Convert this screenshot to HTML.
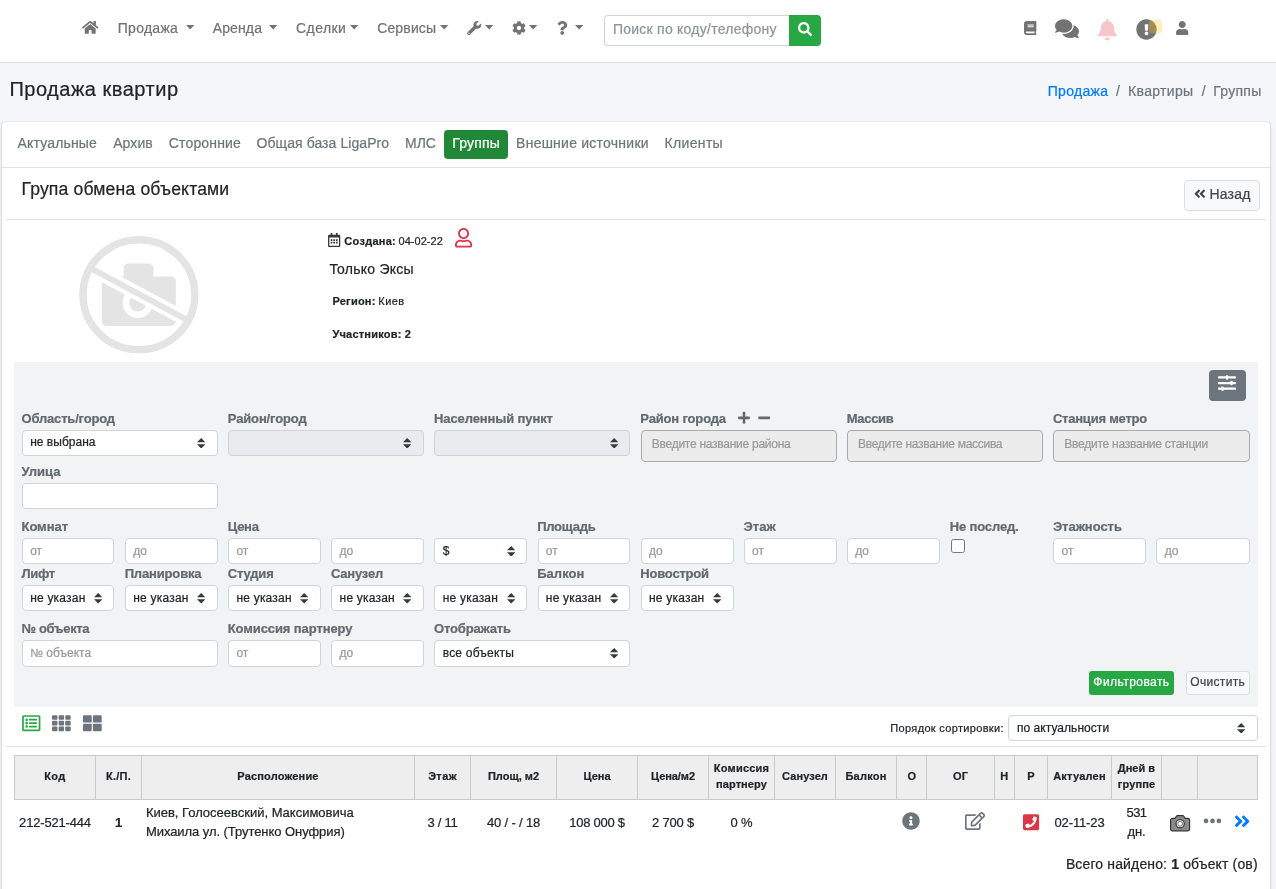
<!DOCTYPE html>
<html lang="ru"><head>
<meta charset="utf-8">
<title>Продажа квартир</title>
<style>
*{box-sizing:border-box;margin:0;padding:0}
html,body{width:1276px;height:889px;overflow:hidden}
body{font-family:"Liberation Sans",sans-serif;background:#f4f6f9;color:#212529;font-size:14px;position:relative;will-change:transform}
.t{position:absolute;white-space:nowrap;line-height:1.2;top:0;-webkit-text-stroke:.22px}
.i{position:absolute;display:block;overflow:visible}
.b{position:absolute}
#nav{left:0;top:0;width:1276px;height:63px;background:#fff;border-bottom:1px solid #dee2e6}
#card{left:2px;top:121.5px;width:1268px;height:800px;background:#fff;border-radius:3px;box-shadow:0 0 1px rgba(0,0,0,.3),0 1px 3px rgba(0,0,0,.22)}
.hr{position:absolute;height:1px;background:#e2e2e2}
.in{position:absolute;height:26px;background:#fff;border:1px solid #ced4da;border-radius:4px}
.dis{background:#e9ecef}
.tag{position:absolute;height:31.5px;background:#ececec;border:1px solid #aaa;border-radius:4px}
.arr{position:absolute;width:8.4px;height:10.6px}
.btn{position:absolute;border-radius:4px}
#tbl{left:14px;top:755px;width:1244px;height:45px;background:#eee;border:1px solid #cacaca}
.vl{position:absolute;top:755px;width:1px;height:45px;background:#cacaca}
</style>
</head>
<body>
<div class="b" id="nav"></div>
<svg class="i" style="left:82px;top:20.4px" width="16.4" height="14.6" viewBox="0 0 576 512" fill="#737373"><path d="M280.37 148.26L96 300.11V464a16 16 0 0 0 16 16l112.06-.29a16 16 0 0 0 15.92-16V368a16 16 0 0 1 16-16h64a16 16 0 0 1 16 16v95.64a16 16 0 0 0 16 16.05L464 480a16 16 0 0 0 16-16V300L295.67 148.26a12.19 12.19 0 0 0-15.3 0zM571.6 251.47L488 182.56V44.05a12 12 0 0 0-12-12h-56a12 12 0 0 0-12 12v72.61L318.47 43a48 48 0 0 0-61 0L4.34 251.47a12 12 0 0 0-1.6 16.9l25.5 31A12 12 0 0 0 45.15 301l235.22-193.74a12.19 12.19 0 0 1 15.3 0L530.9 301a12 12 0 0 0 16.9-1.6l25.5-31a12 12 0 0 0-1.7-16.93z"></path></svg>
<span class="t" style="font-size: 14px; left: 117.78px; color: rgb(115, 115, 115); letter-spacing: 0.272px; top: 20.2px;">Продажа</span>
<svg class="i" style="left:185.9px;top:25.2px" width="8.4" height="4.4" viewBox="0 0 8.4 4.4" fill="#737373"><path d="M0 0h8.400L4.200 4.400z"></path></svg>
<span class="t" style="font-size: 14px; left: 212.68px; color: rgb(115, 115, 115); letter-spacing: 0.138px; top: 20.2px;">Аренда</span>
<svg class="i" style="left:268.5px;top:25.2px" width="8.4" height="4.4" viewBox="0 0 8.4 4.4" fill="#737373"><path d="M0 0h8.400L4.200 4.400z"></path></svg>
<span class="t" style="font-size: 14px; left: 296.08px; color: rgb(115, 115, 115); letter-spacing: 0.42px; top: 20.2px;">Сделки</span>
<svg class="i" style="left:349.5px;top:25.2px" width="8.4" height="4.4" viewBox="0 0 8.4 4.4" fill="#737373"><path d="M0 0h8.400L4.200 4.400z"></path></svg>
<span class="t" style="font-size: 14px; left: 377.18px; color: rgb(115, 115, 115); letter-spacing: 0.146px; top: 20.2px;">Сервисы</span>
<svg class="i" style="left:440.1px;top:25.2px" width="8.4" height="4.4" viewBox="0 0 8.4 4.4" fill="#737373"><path d="M0 0h8.400L4.200 4.400z"></path></svg>
<svg class="i" style="left:466.8px;top:20.8px" width="14.4" height="14" viewBox="0 0 512 512" fill="#737373"><path d="M507.73 109.1c-2.24-9.03-13.54-12.09-20.12-5.51l-74.36 74.36-67.88-11.31-11.31-67.88 74.36-74.36c6.62-6.62 3.43-17.9-5.66-20.16-47.38-11.74-99.55.91-136.58 37.93-39.64 39.64-50.55 97.1-34.05 147.2L18.74 402.76c-24.99 24.99-24.99 65.51 0 90.5 24.99 24.99 65.51 24.99 90.5 0l213.21-213.21c50.12 16.71 107.47 5.68 147.37-34.22 37.07-37.07 49.7-89.32 37.91-136.73zM64 472c-13.25 0-24-10.75-24-24 0-13.26 10.75-24 24-24s24 10.74 24 24c0 13.25-10.75 24-24 24z"></path></svg>
<svg class="i" style="left:484.7px;top:25.2px" width="8.4" height="4.4" viewBox="0 0 8.4 4.4" fill="#737373"><path d="M0 0h8.400L4.200 4.400z"></path></svg>
<svg class="i" style="left:511.6px;top:20.8px" width="14" height="14" viewBox="0 0 512 512" fill="#737373"><path d="M487.4 315.7l-42.6-24.6c4.3-23.2 4.3-47 0-70.2l42.6-24.6c4.9-2.8 7.1-8.6 5.5-14-11.1-35.6-30-67.8-54.7-94.6-3.8-4.1-10-5.1-14.8-2.3L380.8 110c-17.9-15.4-38.5-27.3-60.800-35.100V25.800c0-5.600-3.900-10.500-9.400-11.700-36.700-8.200-74.300-7.800-109.200 0-5.500 1.200-9.400 6.100-9.400 11.700V75c-22.200 7.900-42.800 19.800-60.800 35.100L88.700 85.500c-4.900-2.800-11-1.900-14.800 2.300-24.700 26.700-43.600 58.900-54.700 94.600-1.700 5.400.6 11.200 5.500 14L67.300 221c-4.300 23.200-4.300 47 0 70.200l-42.600 24.600c-4.900 2.800-7.100 8.600-5.500 14 11.100 35.600 30 67.800 54.700 94.600 3.800 4.100 10 5.100 14.800 2.300l42.600-24.600c17.900 15.400 38.500 27.300 60.800 35.100v49.200c0 5.600 3.900 10.500 9.400 11.700 36.700 8.200 74.300 7.800 109.200 0 5.500-1.200 9.400-6.100 9.400-11.700v-49.200c22.200-7.900 42.800-19.800 60.800-35.100l42.600 24.600c4.900 2.800 11 1.900 14.800-2.300 24.700-26.700 43.600-58.900 54.700-94.600 1.500-5.500-.7-11.300-5.600-14.100zM256 336c-44.100 0-80-35.900-80-80s35.900-80 80-80 80 35.900 80 80-35.900 80-80 80z"></path></svg>
<svg class="i" style="left:528.8px;top:25.2px" width="8.4" height="4.4" viewBox="0 0 8.4 4.4" fill="#737373"><path d="M0 0h8.400L4.200 4.400z"></path></svg>
<svg class="i" style="left:556.9px;top:20.6px" width="10.4" height="13.9" viewBox="0 0 384 512" fill="#737373"><path d="M202.021 0C122.202 0 70.503 32.703 29.914 91.026c-7.363 10.580-5.093 25.086 5.178 32.874l43.138 32.709c10.373 7.865 25.132 6.026 33.253-4.148 25.049-31.381 43.630-49.449 82.757-49.449 30.764 0 68.816 19.799 68.816 49.631 0 22.552-18.617 34.134-48.993 51.164-35.423 19.860-82.299 44.576-82.299 106.405V320c0 13.255 10.745 24 24 24h72.471c13.255 0 24-10.745 24-24v-5.773c0-42.860 125.268-44.645 125.268-160.627C377.504 66.256 286.902 0 202.021 0zM192 373.459c-38.196 0-69.271 31.075-69.271 69.271 0 38.195 31.075 69.270 69.271 69.270s69.271-31.075 69.271-69.271-31.075-69.270-69.271-69.270z"></path></svg>
<svg class="i" style="left:574.5px;top:25.2px" width="8.4" height="4.4" viewBox="0 0 8.4 4.4" fill="#737373"><path d="M0 0h8.400L4.200 4.400z"></path></svg>
<div class="b" style="left:604px;top:15px;width:186px;height:31px;background:#fff;border:1px solid #ced4da;border-right:0;border-radius:4px 0 0 4px"></div>
<span class="t" style="font-size: 14px; left: 612.88px; color: rgb(142, 149, 156); letter-spacing: 0.251px; top: 21.3px;">Поиск по коду/телефону</span>
<div class="b" style="left:789px;top:15px;width:32px;height:31px;background:#28a745;border-radius:0 4px 4px 0"></div>
<svg class="i" style="left:798px;top:22.4px" width="14.2" height="14.2" viewBox="0 0 512 512" fill="#fff"><path d="M505 442.7L405.3 343c-4.5-4.5-10.6-7-17-7H372c27.600-35.300 44-79.700 44-128C416 93.100 322.900 0 208 0S0 93.100 0 208s93.100 208 208 208c48.300 0 92.700-16.400 128-44v16.300c0 6.400 2.500 12.500 7 17l99.700 99.700c9.400 9.400 24.600 9.400 33.900 0l28.300-28.300c9.400-9.400 9.400-24.600.1-34zM208 336c-70.700 0-128-57.200-128-128 0-70.700 57.200-128 128-128 70.700 0 128 57.200 128 128 0 70.700-57.200 128-128 128z"></path></svg>
<svg class="i" style="left:1023.8px;top:20.7px" width="12.4" height="14.1" viewBox="0 0 448 512" fill="#737373"><path d="M448 360V24c0-13.300-10.700-24-24-24H96C43 0 0 43 0 96v320c0 53 43 96 96 96h328c13.300 0 24-10.700 24-24v-16c0-7.500-3.500-14.300-8.900-18.700-4.200-15.400-4.200-59.300 0-74.700 5.400-4.300 8.900-11.100 8.900-18.600zM128 134c0-3.300 2.700-6 6-6h212c3.300 0 6 2.700 6 6v20c0 3.300-2.700 6-6 6H134c-3.300 0-6-2.700-6-6v-20zm0 64c0-3.300 2.700-6 6-6h212c3.300 0 6 2.700 6 6v20c0 3.300-2.700 6-6 6H134c-3.300 0-6-2.700-6-6v-20zm253.400 250H96c-17.700 0-32-14.300-32-32 0-17.600 14.400-32 32-32h285.400c-1.900 17.100-1.900 46.900 0 64z"></path></svg>
<svg class="i" style="left:1055.4px;top:18.4px" width="24" height="21.3" viewBox="0 0 576 512" fill="#737373"><path d="M416 192c0-88.400-93.100-160-208-160S0 103.600 0 192c0 34.300 14.100 65.900 38 92-13.400 30.200-35.500 54.200-35.800 54.500-2.200 2.300-2.800 5.700-1.500 8.700S4.800 352 8 352c36.600 0 66.900-12.300 88.700-25 32.200 15.700 70.300 25 111.300 25 114.900 0 208-71.600 208-160zm122 220c23.900-26 38-57.700 38-92 0-66.900-53.500-124.200-129.300-148.100.9 6.600 1.300 13.300 1.300 20.100 0 105.900-107.700 192-240 192-10.800 0-21.300-.8-31.700-1.900C207.800 439.600 281.800 480 368 480c41 0 79.100-9.200 111.300-25 21.800 12.700 52.100 25 88.700 25 3.200 0 6.100-1.900 7.300-4.800 1.300-2.900.7-6.300-1.500-8.700-.3-.3-22.400-24.200-35.800-54.500z"></path></svg>
<svg class="i" style="left:1098.2px;top:18.5px" width="18.7" height="21.3" viewBox="0 0 448 512" fill="#f7c6cb"><path d="M224 512c35.320 0 63.970-28.650 63.970-64H160.030c0 35.350 28.650 64 63.970 64zm215.390-149.710c-19.320-20.760-55.470-51.990-55.470-154.290 0-77.700-54.480-139.900-127.940-155.160V32c0-17.670-14.320-32-31.980-32s-31.980 14.330-31.980 32v20.840C118.560 68.100 64.080 130.300 64.080 208c0 102.300-36.150 133.530-55.470 154.290-6 6.450-8.660 14.160-8.610 21.710.11 16.400 12.980 32 32.100 32h383.800c19.120 0 32-15.600 32.100-32 .05-7.550-2.610-15.270-8.610-21.710z"></path></svg>
<svg class="i" style="left:1135.9px;top:18.6px" width="21" height="21" viewBox="0 0 512 512" fill="#737373"><path d="M504 256c0 136.997-111.043 248-248 248S8 392.997 8 256C8 119.083 119.043 8 256 8s248 111.083 248 248zm-248 50c-25.405 0-46 20.595-46 46s20.595 46 46 46 46-20.595 46-46-20.595-46-46-46zm-43.673-165.346l7.418 136c.347 6.364 5.609 11.346 11.982 11.346h48.546c6.373 0 11.635-4.982 11.982-11.346l7.418-136c.375-6.874-5.098-12.654-11.982-12.654h-63.383c-6.884 0-12.356 5.780-11.981 12.654z"></path></svg>
<div class="b" style="left:1148.7px;top:19.7px;width:13.3px;height:13.5px;background:rgba(255,200,30,.32);border-radius:2px"></div>
<svg class="i" style="left:1176.1px;top:20.8px" width="12.4" height="14.1" viewBox="0 0 448 512" fill="#737373"><path d="M224 256c70.700 0 128-57.300 128-128S294.700 0 224 0 96 57.300 96 128s57.300 128 128 128zm89.600 32h-16.700c-22.200 10.200-46.900 16-72.900 16s-50.600-5.800-72.900-16h-16.700C60.200 288 0 348.200 0 422.400V464c0 26.500 21.500 48 48 48h352c26.500 0 48-21.500 48-48v-41.600c0-74.200-60.200-134.400-134.400-134.400z"></path></svg>
<span class="t" style="font-size: 20px; left: 9.4px; color: rgb(33, 37, 41); letter-spacing: 0.516px; top: 76.8px;">Продажа квартир</span>
<span class="t" style="font-size: 14px; left: 1047.78px; color: rgb(0, 123, 255); letter-spacing: 0.286px; top: 82.8px;">Продажа</span>
<span class="t" style="font-size: 14px; left: 1115.88px; color: rgb(108, 117, 125); top: 82.8px;">/</span>
<span class="t" style="font-size: 14px; left: 1128.08px; color: rgb(108, 117, 125); letter-spacing: 0.32px; top: 82.8px;">Квартиры</span>
<span class="t" style="font-size: 14px; left: 1201.78px; color: rgb(108, 117, 125); top: 82.8px;">/</span>
<span class="t" style="font-size: 14px; left: 1213.28px; color: rgb(108, 117, 125); letter-spacing: 0.264px; top: 82.8px;">Группы</span>
<div class="b" id="card"></div>
<span class="t" style="font-size: 14px; left: 17.58px; color: rgb(108, 117, 125); letter-spacing: 0.147px; top: 135px;">Актуальные</span>
<span class="t" style="font-size: 14px; left: 113.18px; color: rgb(108, 117, 125); letter-spacing: 0.081px; top: 135px;">Архив</span>
<span class="t" style="font-size: 14px; left: 168.78px; color: rgb(108, 117, 125); letter-spacing: 0.16px; top: 135px;">Сторонние</span>
<span class="t" style="font-size: 14px; left: 256.58px; color: rgb(108, 117, 125); letter-spacing: 0.066px; top: 135px;">Общая база LigaPro</span>
<span class="t" style="font-size: 14px; left: 405.08px; color: rgb(108, 117, 125); letter-spacing: -0.043px; top: 135px;">МЛС</span>
<span class="t" style="font-size: 14px; left: 516.08px; color: rgb(108, 117, 125); letter-spacing: 0.239px; top: 135px;">Внешние источники</span>
<span class="t" style="font-size: 14px; left: 664.58px; color: rgb(108, 117, 125); letter-spacing: 0.328px; top: 135px;">Клиенты</span>
<div class="b" style="left:444px;top:130px;width:64px;height:28.6px;background:#218838;border-radius:4px"></div>
<span class="t" style="font-size: 14px; left: 452.18px; color: rgb(255, 255, 255); letter-spacing: 0.197px; top: 135px;">Группы</span>
<div class="hr" style="left:2px;top:167px;width:1268.5px"></div>
<span class="t" style="font-size: 17.6px; left: 21.47px; color: rgb(33, 37, 41); letter-spacing: 0.158px; top: 178.5px;">Група обмена объектами</span>
<div class="btn" style="left:1184.3px;top:180px;width:75.5px;height:31px;background:#f8f9fa;border:1px solid #ddd"></div>
<svg class="i" style="left:1193.6px;top:187.2px" width="11.7" height="13.4" viewBox="0 0 448 512" fill="#444"><path d="M223.7 239l136-136c9.400-9.400 24.600-9.400 33.900 0l22.600 22.600c9.400 9.400 9.400 24.600 0 33.900L319.900 256l96.400 96.400c9.400 9.400 9.400 24.600 0 33.900L393.700 409c-9.400 9.400-24.600 9.400-33.900 0l-136-136c-9.500-9.400-9.500-24.600-.1-34zm-192 34l136 136c9.400 9.400 24.600 9.400 33.900 0l22.600-22.600c9.400-9.400 9.400-24.600 0-33.900L127.900 256l96.400-96.400c9.400-9.400 9.400-24.600 0-33.900L201.700 103c-9.400-9.400-24.600-9.400-33.900 0l-136 136c-9.500 9.400-9.500 24.600-.1 34z"></path></svg>
<span class="t" style="font-size: 14px; left: 1209.38px; color: rgb(68, 68, 68); letter-spacing: 0.223px; top: 186px;">Назад</span>
<div class="hr" style="left:6px;top:219px;width:1260px"></div>
<svg class="i" style="left:76px;top:232px" width="126" height="126" viewBox="0 0 126 126">
<path fill="#e4e4e4" d="M25.700 49.400a5 5 0 0 1 5-5h17v-8a5 5 0 0 1 5-5h19.700a5 5 0 0 1 5 5v8h17.400a5 5 0 0 1 5 5v39.500a5 5 0 0 1-5 5h-64.100a5 5 0 0 1-5-5z"></path>
<circle cx="61.800" cy="70.800" r="15.200" fill="#fff"></circle>
<circle cx="61.800" cy="70.800" r="8.600" fill="#e4e4e4"></circle>
<path stroke="#fff" stroke-width="14" d="M14.500 36.100L111.500 88.100"></path>
<path stroke="#e4e4e4" stroke-width="6" d="M14.500 36.100L111.500 88.100"></path>
<ellipse cx="62.900" cy="62.800" rx="58.500" ry="57.500" fill="none" stroke="#fff" stroke-width="5"></ellipse>
<ellipse cx="62.900" cy="62.800" rx="56" ry="55" fill="none" stroke="#e4e4e4" stroke-width="7.600"></ellipse>
<ellipse cx="62.900" cy="62.800" rx="62.500" ry="61.500" fill="none" stroke="#fff" stroke-width="5.500"></ellipse>
</svg>
<svg class="i" style="left:328.2px;top:233px" width="12.3" height="14" viewBox="0 0 448 512" fill="#343a40"><path d="M148 288h-40c-6.600 0-12-5.400-12-12v-40c0-6.600 5.400-12 12-12h40c6.600 0 12 5.400 12 12v40c0 6.600-5.400 12-12 12zm108-12v-40c0-6.600-5.400-12-12-12h-40c-6.600 0-12 5.400-12 12v40c0 6.600 5.400 12 12 12h40c6.600 0 12-5.400 12-12zm96 0v-40c0-6.600-5.400-12-12-12h-40c-6.600 0-12 5.400-12 12v40c0 6.600 5.400 12 12 12h40c6.600 0 12-5.400 12-12zm-96 96v-40c0-6.600-5.400-12-12-12h-40c-6.600 0-12 5.400-12 12v40c0 6.600 5.400 12 12 12h40c6.600 0 12-5.400 12-12zm-96 0v-40c0-6.600-5.400-12-12-12h-40c-6.600 0-12 5.400-12 12v40c0 6.600 5.400 12 12 12h40c6.600 0 12-5.400 12-12zm192 0v-40c0-6.600-5.400-12-12-12h-40c-6.600 0-12 5.400-12 12v40c0 6.600 5.400 12 12 12h40c6.600 0 12-5.400 12-12zm96-260v352c0 26.500-21.500 48-48 48H48c-26.500 0-48-21.500-48-48V112c0-26.500 21.500-48 48-48h48V12c0-6.600 5.400-12 12-12h40c6.600 0 12 5.400 12 12v52h128V12c0-6.600 5.400-12 12-12h40c6.600 0 12 5.400 12 12v52h48c26.500 0 48 21.500 48 48zm-48 346V160H48v298c0 3.300 2.700 6 6 6h340c3.300 0 6-2.700 6-6z"></path></svg>
<span class="t" style="font-size: 11px; left: 344.37px; color: rgb(33, 37, 41); font-weight: bold; letter-spacing: 0.268px; top: 235.1px;">Создана:</span>
<span class="t" style="font-size: 11px; left: 398.47px; color: rgb(33, 37, 41); letter-spacing: 0.052px; top: 235.1px;">04-02-22</span>
<svg class="i" style="left:455.2px;top:227.8px" width="17.2" height="19.6" viewBox="0 0 448 512" fill="#dc3545"><path d="M313.600 304c-28.700 0-42.500 16-89.600 16-47.100 0-60.800-16-89.600-16C60.200 304 0 364.200 0 438.400V464c0 26.500 21.500 48 48 48h352c26.500 0 48-21.500 48-48v-25.600c0-74.200-60.200-134.400-134.400-134.400zM400 464H48v-25.600c0-47.600 38.800-86.400 86.400-86.400 14.600 0 38.300 16 89.600 16 51.700 0 74.900-16 89.600-16 47.600 0 86.400 38.800 86.400 86.400V464zM224 288c79.500 0 144-64.500 144-144S303.500 0 224 0 80 64.500 80 144s64.500 144 144 144zm0-240c52.900 0 96 43.100 96 96s-43.100 96-96 96-96-43.100-96-96 43.100-96 96-96z"></path></svg>
<span class="t" style="font-size: 14px; left: 329.38px; color: rgb(33, 37, 41); letter-spacing: 0.252px; top: 261.1px;">Только Эксы</span>
<span class="t" style="font-size: 11px; left: 332.47px; color: rgb(33, 37, 41); font-weight: bold; letter-spacing: 0.228px; top: 294.6px;">Регион:</span>
<span class="t" style="font-size: 11px; left: 378.37px; color: rgb(33, 37, 41); letter-spacing: 0.386px; top: 294.6px;">Киев</span>
<span class="t" style="font-size: 11px; left: 332.47px; color: rgb(33, 37, 41); font-weight: bold; letter-spacing: 0.209px; top: 327.6px;">Участников: 2</span>
<div class="b" style="left:14px;top:362px;width:1244px;height:345px;background:#f1f3f5"></div>
<div class="btn" style="left:1209px;top:370px;width:37.2px;height:31px;background:#6c757d"></div>
<svg class="i" style="left:1218.3px;top:373.7px" width="18" height="18" viewBox="0 0 512 512" fill="#fff"><path d="M496 384H160v-16c0-8.800-7.200-16-16-16h-32c-8.800 0-16 7.200-16 16v16H16c-8.800 0-16 7.200-16 16v32c0 8.800 7.200 16 16 16h80v16c0 8.800 7.200 16 16 16h32c8.800 0 16-7.200 16-16v-16h336c8.800 0 16-7.200 16-16v-32c0-8.800-7.200-16-16-16zm0-160h-80v-16c0-8.800-7.200-16-16-16h-32c-8.800 0-16 7.200-16 16v16H16c-8.800 0-16 7.200-16 16v32c0 8.800 7.200 16 16 16h336v16c0 8.800 7.200 16 16 16h32c8.800 0 16-7.200 16-16v-16h80c8.800 0 16-7.200 16-16v-32c0-8.800-7.200-16-16-16zm0-160H288V48c0-8.800-7.200-16-16-16h-32c-8.800 0-16 7.200-16 16v16H16C7.200 64 0 71.200 0 80v32c0 8.800 7.200 16 16 16h208v16c0 8.800 7.200 16 16 16h32c8.800 0 16-7.200 16-16v-16h208c8.800 0 16-7.200 16-16V80c0-8.800-7.200-16-16-16z"></path></svg>
<span class="t" style="font-size: 13px; left: 21.51px; color: rgb(98, 106, 113); font-weight: bold; letter-spacing: -0.175px; top: 411.2px;">Область/город</span>
<div class="in" style="left:21.9px;top:430px;width:195.74px;height:26px"></div>
<span class="t" style="font-size: 12px; left: 30.14px; color: rgb(33, 37, 41); letter-spacing: 0.026px; top: 435.4px;">не выбрана</span>
<svg class="arr" style="left:197.04px;top:437.6px" viewBox="0 0 8.4 10.6" fill="#343a40"><path d="M0 4.300L4.200 0l4.200 4.300zM0 6.300h8.400L4.200 10.600z"></path></svg>
<span class="t" style="font-size: 13px; left: 227.79px; color: rgb(98, 106, 113); font-weight: bold; letter-spacing: -0.136px; top: 411.2px;">Район/город</span>
<div class="in dis" style="left:228.18px;top:430px;width:195.84px;height:26px"></div>
<svg class="arr" style="left:403.42px;top:437.6px" viewBox="0 0 8.4 10.6" fill="#343a40"><path d="M0 4.300L4.200 0l4.200 4.300zM0 6.300h8.400L4.200 10.600z"></path></svg>
<span class="t" style="font-size: 13px; left: 434.07px; color: rgb(98, 106, 113); font-weight: bold; letter-spacing: -0.115px; top: 411.2px;">Населенный пункт</span>
<div class="in dis" style="left:434.46px;top:430px;width:195.94px;height:26px"></div>
<svg class="arr" style="left:609.8px;top:437.6px" viewBox="0 0 8.4 10.6" fill="#343a40"><path d="M0 4.300L4.200 0l4.200 4.300zM0 6.300h8.400L4.200 10.600z"></path></svg>
<span class="t" style="font-size: 13px; left: 640.35px; color: rgb(98, 106, 113); font-weight: bold; letter-spacing: -0.161px; top: 411.2px;">Район города</span>
<svg class="i" style="left:738.4px;top:411.3px" width="12" height="13.7" viewBox="0 0 448 512" fill="#626a71"><path d="M416 208H272V64c0-17.670-14.330-32-32-32h-32c-17.670 0-32 14.330-32 32v144H32c-17.670 0-32 14.330-32 32v32c0 17.670 14.330 32 32 32h144v144c0 17.670 14.330 32 32 32h32c17.670 0 32-14.330 32-32V304h144c17.670 0 32-14.330 32-32v-32c0-17.670-14.330-32-32-32z"></path></svg>
<svg class="i" style="left:758px;top:411.3px" width="12.4" height="13.7" viewBox="0 0 448 512" fill="#626a71"><path d="M416 208H32c-17.670 0-32 14.330-32 32v32c0 17.670 14.330 32 32 32h384c17.670 0 32-14.330 32-32v-32c0-17.670-14.330-32-32-32z"></path></svg>
<span class="t" style="font-size: 13px; left: 846.63px; color: rgb(98, 106, 113); font-weight: bold; letter-spacing: -0.315px; top: 411.2px;">Массив</span>
<span class="t" style="font-size: 13px; left: 1052.91px; color: rgb(98, 106, 113); font-weight: bold; letter-spacing: -0.221px; top: 411.2px;">Станция метро</span>
<div class="tag" style="left:640.74px;top:430px;width:196.04px"></div>
<span class="t" style="font-size: 12px; left: 651.78px; color: rgb(153, 153, 153); letter-spacing: -0.259px; top: 437.4px;">Введите название района</span>
<div class="tag" style="left:847.02px;top:430px;width:196.14px"></div>
<span class="t" style="font-size: 12px; left: 858.06px; color: rgb(153, 153, 153); letter-spacing: -0.291px; top: 437.4px;">Введите название массива</span>
<div class="tag" style="left:1053.3px;top:430px;width:196.24px"></div>
<span class="t" style="font-size: 12px; left: 1064.34px; color: rgb(153, 153, 153); letter-spacing: -0.245px; top: 437.4px;">Введите название станции</span>
<span class="t" style="font-size: 13px; left: 21.51px; color: rgb(98, 106, 113); font-weight: bold; letter-spacing: 0.015px; top: 463.5px;">Улица</span>
<div class="in" style="left:21.9px;top:483px;width:195.74px"></div>
<span class="t" style="font-size: 13px; left: 21.51px; color: rgb(98, 106, 113); font-weight: bold; letter-spacing: -0.05px; top: 519px;">Комнат</span>
<div class="in" style="left:21.9px;top:538.2px;width:92.55px"></div>
<span class="t" style="font-size: 12px; left: 30.14px; color: rgb(153, 153, 153); top: 544.3px;">от</span>
<div class="in" style="left:125.04px;top:538.2px;width:92.6px"></div>
<span class="t" style="font-size: 12px; left: 133.28px; color: rgb(153, 153, 153); top: 544.3px;">до</span>
<span class="t" style="font-size: 13px; left: 227.79px; color: rgb(98, 106, 113); font-weight: bold; letter-spacing: -0.297px; top: 519px;">Цена</span>
<div class="in" style="left:228.18px;top:538.2px;width:92.65px"></div>
<span class="t" style="font-size: 12px; left: 236.42px; color: rgb(153, 153, 153); top: 544.3px;">от</span>
<div class="in" style="left:331.32px;top:538.2px;width:92.7px"></div>
<span class="t" style="font-size: 12px; left: 339.56px; color: rgb(153, 153, 153); top: 544.3px;">до</span>
<div class="in" style="left:434.46px;top:538.2px;width:92.75px;height:26px"></div>
<span class="t" style="font-size: 12px; left: 442.7px; color: rgb(33, 37, 41); top: 543.6px;">$</span>
<svg class="arr" style="left:506.61px;top:545.8px" viewBox="0 0 8.4 10.6" fill="#343a40"><path d="M0 4.300L4.200 0l4.200 4.300zM0 6.300h8.400L4.200 10.600z"></path></svg>
<span class="t" style="font-size: 13px; left: 537.21px; color: rgb(98, 106, 113); font-weight: bold; letter-spacing: -0.258px; top: 519px;">Площадь</span>
<div class="in" style="left:537.6px;top:538.2px;width:92.8px"></div>
<span class="t" style="font-size: 12px; left: 545.84px; color: rgb(153, 153, 153); top: 544.3px;">от</span>
<div class="in" style="left:640.74px;top:538.2px;width:92.85px"></div>
<span class="t" style="font-size: 12px; left: 648.98px; color: rgb(153, 153, 153); top: 544.3px;">до</span>
<span class="t" style="font-size: 13px; left: 743.49px; color: rgb(98, 106, 113); font-weight: bold; letter-spacing: 0.079px; top: 519px;">Этаж</span>
<div class="in" style="left:743.88px;top:538.2px;width:92.9px"></div>
<span class="t" style="font-size: 12px; left: 752.12px; color: rgb(153, 153, 153); top: 544.3px;">от</span>
<div class="in" style="left:847.02px;top:538.2px;width:92.95px"></div>
<span class="t" style="font-size: 12px; left: 855.26px; color: rgb(153, 153, 153); top: 544.3px;">до</span>
<span class="t" style="font-size: 13px; left: 949.77px; color: rgb(98, 106, 113); font-weight: bold; letter-spacing: -0.149px; top: 519px;">Не послед.</span>
<div class="b" style="left:951.3px;top:539.3px;width:13.3px;height:13.3px;background:#fff;border:1px solid #767676;border-radius:2.5px"></div>
<span class="t" style="font-size: 13px; left: 1052.91px; color: rgb(98, 106, 113); font-weight: bold; letter-spacing: -0.033px; top: 519px;">Этажность</span>
<div class="in" style="left:1053.3px;top:538.2px;width:93.05px"></div>
<span class="t" style="font-size: 12px; left: 1061.54px; color: rgb(153, 153, 153); top: 544.3px;">от</span>
<div class="in" style="left:1156.44px;top:538.2px;width:93.1px"></div>
<span class="t" style="font-size: 12px; left: 1164.68px; color: rgb(153, 153, 153); top: 544.3px;">до</span>
<span class="t" style="font-size: 13px; left: 21.51px; color: rgb(98, 106, 113); font-weight: bold; letter-spacing: -0.327px; top: 566px;">Лифт</span>
<span class="t" style="font-size: 13px; left: 124.65px; color: rgb(98, 106, 113); font-weight: bold; letter-spacing: -0.152px; top: 566px;">Планировка</span>
<span class="t" style="font-size: 13px; left: 227.79px; color: rgb(98, 106, 113); font-weight: bold; letter-spacing: -0.175px; top: 566px;">Студия</span>
<span class="t" style="font-size: 13px; left: 330.93px; color: rgb(98, 106, 113); font-weight: bold; letter-spacing: -0.184px; top: 566px;">Санузел</span>
<span class="t" style="font-size: 13px; left: 537.21px; color: rgb(98, 106, 113); font-weight: bold; letter-spacing: 0.035px; top: 566px;">Балкон</span>
<span class="t" style="font-size: 13px; left: 640.35px; color: rgb(98, 106, 113); font-weight: bold; letter-spacing: -0.212px; top: 566px;">Новострой</span>
<div class="in" style="left:21.9px;top:585px;width:92.55px;height:26px"></div>
<span class="t" style="font-size: 12px; left: 30.14px; color: rgb(33, 37, 41); letter-spacing: 0.213px; top: 591.4px;">не указан</span>
<svg class="arr" style="left:93.85px;top:593.4px" viewBox="0 0 8.4 10.6" fill="#343a40"><path d="M0 4.300L4.200 0l4.200 4.300zM0 6.300h8.400L4.200 10.600z"></path></svg>
<div class="in" style="left:125.04px;top:585px;width:92.6px;height:26px"></div>
<span class="t" style="font-size: 12px; left: 133.28px; color: rgb(33, 37, 41); letter-spacing: 0.213px; top: 591.4px;">не указан</span>
<svg class="arr" style="left:197.04px;top:593.4px" viewBox="0 0 8.4 10.6" fill="#343a40"><path d="M0 4.300L4.200 0l4.200 4.300zM0 6.300h8.400L4.200 10.600z"></path></svg>
<div class="in" style="left:228.18px;top:585px;width:92.65px;height:26px"></div>
<span class="t" style="font-size: 12px; left: 236.42px; color: rgb(33, 37, 41); letter-spacing: 0.213px; top: 591.4px;">не указан</span>
<svg class="arr" style="left:300.23px;top:593.4px" viewBox="0 0 8.4 10.6" fill="#343a40"><path d="M0 4.300L4.200 0l4.200 4.300zM0 6.300h8.400L4.200 10.600z"></path></svg>
<div class="in" style="left:331.32px;top:585px;width:92.7px;height:26px"></div>
<span class="t" style="font-size: 12px; left: 339.56px; color: rgb(33, 37, 41); letter-spacing: 0.213px; top: 591.4px;">не указан</span>
<svg class="arr" style="left:403.42px;top:593.4px" viewBox="0 0 8.4 10.6" fill="#343a40"><path d="M0 4.300L4.200 0l4.200 4.300zM0 6.300h8.400L4.200 10.600z"></path></svg>
<div class="in" style="left:434.46px;top:585px;width:92.75px;height:26px"></div>
<span class="t" style="font-size: 12px; left: 442.7px; color: rgb(33, 37, 41); letter-spacing: 0.213px; top: 591.4px;">не указан</span>
<svg class="arr" style="left:506.61px;top:593.4px" viewBox="0 0 8.4 10.6" fill="#343a40"><path d="M0 4.300L4.200 0l4.200 4.300zM0 6.300h8.400L4.200 10.600z"></path></svg>
<div class="in" style="left:537.6px;top:585px;width:92.8px;height:26px"></div>
<span class="t" style="font-size: 12px; left: 545.84px; color: rgb(33, 37, 41); letter-spacing: 0.213px; top: 591.4px;">не указан</span>
<svg class="arr" style="left:609.8px;top:593.4px" viewBox="0 0 8.4 10.6" fill="#343a40"><path d="M0 4.300L4.200 0l4.200 4.300zM0 6.300h8.400L4.200 10.600z"></path></svg>
<div class="in" style="left:640.74px;top:585px;width:92.85px;height:26px"></div>
<span class="t" style="font-size: 12px; left: 648.98px; color: rgb(33, 37, 41); letter-spacing: 0.213px; top: 591.4px;">не указан</span>
<svg class="arr" style="left:712.99px;top:593.4px" viewBox="0 0 8.4 10.6" fill="#343a40"><path d="M0 4.300L4.200 0l4.200 4.300zM0 6.300h8.400L4.200 10.600z"></path></svg>
<span class="t" style="font-size: 13px; left: 21.51px; color: rgb(98, 106, 113); font-weight: bold; letter-spacing: -0.327px; top: 621.2px;">№ объекта</span>
<div class="in" style="left:21.9px;top:640.2px;width:195.74px;height:27px"></div>
<span class="t" style="font-size: 12px; left: 30.14px; color: rgb(153, 153, 153); top: 646.3px;">№ объекта</span>
<span class="t" style="font-size: 13px; left: 227.79px; color: rgb(98, 106, 113); font-weight: bold; letter-spacing: -0.099px; top: 621.2px;">Комиссия партнеру</span>
<div class="in" style="left:228.18px;top:640.2px;width:92.65px;height:27px"></div>
<span class="t" style="font-size: 12px; left: 236.42px; color: rgb(153, 153, 153); top: 646.3px;">от</span>
<div class="in" style="left:331.32px;top:640.2px;width:92.7px;height:27px"></div>
<span class="t" style="font-size: 12px; left: 339.56px; color: rgb(153, 153, 153); top: 646.3px;">до</span>
<span class="t" style="font-size: 13px; left: 434.07px; color: rgb(98, 106, 113); font-weight: bold; letter-spacing: -0.164px; top: 621.2px;">Отображать</span>
<div class="in" style="left:434.46px;top:640.2px;width:195.94px;height:27px"></div>
<span class="t" style="font-size: 12px; left: 442.7px; color: rgb(33, 37, 41); letter-spacing: 0.213px; top: 645.6px;">все объекты</span>
<svg class="arr" style="left:609.8px;top:647.8px" viewBox="0 0 8.4 10.6" fill="#343a40"><path d="M0 4.300L4.200 0l4.200 4.300zM0 6.300h8.400L4.200 10.600z"></path></svg>
<div class="btn" style="left:1089px;top:671.2px;width:85px;height:23.8px;background:#28a745;border-radius:3px"></div>
<span class="t" style="font-size: 12px; left: 1093.34px; color: rgb(255, 255, 255); letter-spacing: 0.439px; top: 674.8px;">Фильтровать</span>
<div class="btn" style="left:1186px;top:671.2px;width:63.6px;height:23.8px;background:#f8f9fa;border:1px solid #ddd;border-radius:3px"></div>
<span class="t" style="font-size: 12px; left: 1190.24px; color: rgb(68, 68, 68); letter-spacing: 0.334px; top: 674.8px;">Очистить</span>
<svg class="i" style="left:21.7px;top:713.8px" width="18.5" height="18.3" viewBox="0 0 512 512" fill="#28a745"><path d="M464 32H48C21.490 32 0 53.490 0 80v352c0 26.510 21.490 48 48 48h416c26.510 0 48-21.490 48-48V80c0-26.510-21.490-48-48-48zm-6 400H54a6 6 0 0 1-6-6V86a6 6 0 0 1 6-6h404a6 6 0 0 1 6 6v340a6 6 0 0 1-6 6zm-42-92v24c0 6.627-5.373 12-12 12H204c-6.627 0-12-5.373-12-12v-24c0-6.627 5.373-12 12-12h200c6.627 0 12 5.373 12 12zm0-96v24c0 6.627-5.373 12-12 12H204c-6.627 0-12-5.373-12-12v-24c0-6.627 5.373-12 12-12h200c6.627 0 12 5.373 12 12zm0-96v24c0 6.627-5.373 12-12 12H204c-6.627 0-12-5.373-12-12v-24c0-6.627 5.373-12 12-12h200c6.627 0 12 5.373 12 12zm-252 12c0 19.882-16.118 36-36 36s-36-16.118-36-36 16.118-36 36-36 36 16.118 36 36zm0 96c0 19.882-16.118 36-36 36s-36-16.118-36-36 16.118-36 36-36 36 16.118 36 36zm0 96c0 19.882-16.118 36-36 36s-36-16.118-36-36 16.118-36 36-36 36 16.118 36 36z"></path></svg>
<svg class="i" style="left:52.1px;top:713.7px" width="18.7" height="18.3" viewBox="0 0 512 512" preserveAspectRatio="none" fill="#6c757d"><rect x="0" y="32" width="149.3" height="128" rx="24"></rect><rect x="181.3" y="32" width="149.3" height="128" rx="24"></rect><rect x="362.7" y="32" width="149.3" height="128" rx="24"></rect><rect x="0" y="192" width="149.3" height="128" rx="24"></rect><rect x="181.3" y="192" width="149.3" height="128" rx="24"></rect><rect x="362.7" y="192" width="149.3" height="128" rx="24"></rect><rect x="0" y="352" width="149.3" height="128" rx="24"></rect><rect x="181.3" y="352" width="149.3" height="128" rx="24"></rect><rect x="362.7" y="352" width="149.3" height="128" rx="24"></rect></svg>
<svg class="i" style="left:82.8px;top:713.7px" width="18.7" height="18.3" viewBox="0 0 512 512" preserveAspectRatio="none" fill="#6c757d"><rect x="0" y="32" width="240" height="208" rx="24"></rect><rect x="272" y="32" width="240" height="208" rx="24"></rect><rect x="0" y="272" width="240" height="208" rx="24"></rect><rect x="272" y="272" width="240" height="208" rx="24"></rect></svg>
<span class="t" style="font-size: 11px; left: 890.37px; color: rgb(33, 37, 41); letter-spacing: 0.325px; top: 721.6px;">Порядок сортировки:</span>
<div class="in" style="left:1008.2px;top:715.4px;width:249.6px;height:25.4px"></div>
<span class="t" style="font-size: 12px; left: 1016.94px; color: rgb(33, 37, 41); letter-spacing: 0.048px; top: 720.6px;">по актуальности</span>
<svg class="arr" style="left:1236.9px;top:722.8px" viewBox="0 0 8.4 10.6" fill="#343a40"><path d="M0 4.300L4.200 0l4.200 4.300zM0 6.300h8.400L4.200 10.600z"></path></svg>
<div class="hr" style="left:6px;top:746px;width:1260px"></div>
<div class="b" id="tbl"></div>
<div class="vl" style="left:95px"></div>
<div class="vl" style="left:141px"></div>
<div class="vl" style="left:414px"></div>
<div class="vl" style="left:470px"></div>
<div class="vl" style="left:556px"></div>
<div class="vl" style="left:637px"></div>
<div class="vl" style="left:708px"></div>
<div class="vl" style="left:774px"></div>
<div class="vl" style="left:835px"></div>
<div class="vl" style="left:896px"></div>
<div class="vl" style="left:926px"></div>
<div class="vl" style="left:994px"></div>
<div class="vl" style="left:1014px"></div>
<div class="vl" style="left:1047px"></div>
<div class="vl" style="left:1111px"></div>
<div class="vl" style="left:1161px"></div>
<div class="vl" style="left:1197px"></div>
<span class="t" style="font-size: 11px; color: rgb(33, 37, 41); font-weight: bold; letter-spacing: 0.46px; left: 44.17px; top: 770.1px;">Код</span>
<span class="t" style="font-size: 11px; color: rgb(33, 37, 41); font-weight: bold; letter-spacing: 0.233px; left: 106.02px; top: 770.1px;">К./П.</span>
<span class="t" style="font-size: 11px; color: rgb(33, 37, 41); font-weight: bold; letter-spacing: 0.177px; left: 237.32px; top: 770.1px;">Расположение</span>
<span class="t" style="font-size: 11px; color: rgb(33, 37, 41); font-weight: bold; letter-spacing: 0.405px; left: 428.13px; top: 770.1px;">Этаж</span>
<span class="t" style="font-size: 11px; color: rgb(33, 37, 41); font-weight: bold; letter-spacing: -0.008px; left: 487.97px; top: 770.1px;">Площ, м2</span>
<span class="t" style="font-size: 11px; color: rgb(33, 37, 41); font-weight: bold; letter-spacing: -0.001px; left: 583.48px; top: 770.1px;">Цена</span>
<span class="t" style="font-size: 11px; color: rgb(33, 37, 41); font-weight: bold; letter-spacing: -0.074px; left: 651.08px; top: 770.1px;">Цена/м2</span>
<span class="t" style="font-size: 11px; color: rgb(33, 37, 41); font-weight: bold; letter-spacing: 0.219px; left: 713.82px; top: 761.8px;">Комиссия</span>
<span class="t" style="font-size: 11px; color: rgb(33, 37, 41); font-weight: bold; letter-spacing: 0.084px; left: 716.07px; top: 777.8px;">партнеру</span>
<span class="t" style="font-size: 11px; color: rgb(33, 37, 41); font-weight: bold; letter-spacing: 0.087px; left: 782.07px; top: 770.1px;">Санузел</span>
<span class="t" style="font-size: 11px; color: rgb(33, 37, 41); font-weight: bold; letter-spacing: 0.252px; left: 845.38px; top: 770.1px;">Балкон</span>
<span class="t" style="font-size: 11px; color: rgb(33, 37, 41); font-weight: bold; letter-spacing: -0.402px; left: 907.42px; top: 770.1px;">О</span>
<span class="t" style="font-size: 11px; color: rgb(33, 37, 41); font-weight: bold; letter-spacing: 0.082px; left: 953.02px; top: 770.1px;">ОГ</span>
<span class="t" style="font-size: 11px; color: rgb(33, 37, 41); font-weight: bold; letter-spacing: 0.607px; left: 1000.22px; top: 770.1px;">Н</span>
<span class="t" style="font-size: 11px; color: rgb(33, 37, 41); font-weight: bold; letter-spacing: 0.216px; left: 1027.22px; top: 770.1px;">Р</span>
<span class="t" style="font-size: 11px; color: rgb(33, 37, 41); font-weight: bold; letter-spacing: 0.231px; left: 1053.17px; top: 770.1px;">Актуален</span>
<span class="t" style="font-size: 11px; color: rgb(33, 37, 41); font-weight: bold; letter-spacing: 0.029px; left: 1117.82px; top: 762.2px;">Дней в</span>
<span class="t" style="font-size: 11px; color: rgb(33, 37, 41); font-weight: bold; letter-spacing: 0.112px; left: 1117.82px; top: 778px;">группе</span>
<span class="t" style="font-size: 13px; color: rgb(33, 37, 41); letter-spacing: -0.178px; left: 19.11px; top: 815px;">212-521-444</span>
<span class="t" style="font-size: 13px; color: rgb(33, 37, 41); font-weight: bold; left: 114.88px; top: 815px;">1</span>
<span class="t" style="font-size: 13px; left: 145.91px; color: rgb(33, 37, 41); letter-spacing: -0.01px; top: 805px;">Киев, Голосеевский, Максимовича</span>
<span class="t" style="font-size: 13px; left: 145.91px; color: rgb(33, 37, 41); letter-spacing: -0.061px; top: 823.7px;">Михаила ул. (Трутенко Онуфрия)</span>
<span class="t" style="font-size: 13px; color: rgb(33, 37, 41); letter-spacing: -0.247px; left: 427.45px; top: 815px;">3 / 11</span>
<span class="t" style="font-size: 13px; color: rgb(33, 37, 41); letter-spacing: -0.158px; left: 486.91px; top: 815px;">40 / - / 18</span>
<span class="t" style="font-size: 13px; color: rgb(33, 37, 41); letter-spacing: -0.285px; left: 569.36px; top: 815px;">108 000 $</span>
<span class="t" style="font-size: 13px; color: rgb(33, 37, 41); letter-spacing: -0.171px; left: 651.91px; top: 815px;">2 700 $</span>
<span class="t" style="font-size: 13px; color: rgb(33, 37, 41); letter-spacing: -0.109px; left: 730.46px; top: 815px;">0 %</span>
<svg class="i" style="left:902.2px;top:811.9px" width="18" height="18" viewBox="0 0 512 512" fill="#6c757d"><path d="M256 8C119.043 8 8 119.083 8 256c0 136.997 111.043 248 248 248s248-111.003 248-248C504 119.083 392.957 8 256 8zm0 110c23.196 0 42 18.804 42 42s-18.804 42-42 42-42-18.804-42-42 18.804-42 42-42zm56 254c0 6.627-5.373 12-12 12h-88c-6.627 0-12-5.373-12-12v-24c0-6.627 5.373-12 12-12h12v-64h-12c-6.627 0-12-5.373-12-12v-24c0-6.627 5.373-12 12-12h64c6.627 0 12 5.373 12 12v100h12c6.627 0 12 5.373 12 12v24z"></path></svg>
<svg class="i" style="left:964.9px;top:811.8px" width="20.1" height="17.9" viewBox="0 0 576 512" fill="#6c757d"><path d="M402.3 344.9l32-32c5-5 13.700-1.500 13.700 5.700V464c0 26.500-21.500 48-48 48H48c-26.500 0-48-21.500-48-48V112c0-26.500 21.500-48 48-48h273.500c7.100 0 10.700 8.600 5.700 13.700l-32 32c-1.500 1.500-3.500 2.300-5.700 2.300H48v352h352V350.500c0-2.100.8-4.100 2.300-5.600zm156.600-201.800L296.300 405.700l-90.400 10c-26.200 2.900-48.500-19.200-45.600-45.600l10-90.400L432.900 17.100c22.900-22.900 59.900-22.900 82.700 0l43.200 43.200c22.900 22.900 22.900 60 .1 82.800zM460.100 174L402 115.900 216.200 301.800l-7.300 65.300 65.300-7.300L460.100 174zm64.800-79.700l-43.200-43.200c-4.100-4.100-10.800-4.100-14.800 0L436 82l58.100 58.100 30.900-30.900c4-4.200 4-10.800-.1-14.900z"></path></svg>
<svg class="i" style="left:1022.9px;top:812.9px" width="16.1" height="18.4" viewBox="0 0 448 512" fill="#dc3545"><path d="M400 32H48C21.490 32 0 53.490 0 80v352c0 26.510 21.490 48 48 48h352c26.510 0 48-21.490 48-48V80c0-26.510-21.490-48-48-48zM94 416c-7.033 0-13.057-4.873-14.616-11.627l-14.998-65a15 15 0 0 1 8.707-17.160l69.998-29.999a15 15 0 0 1 17.518 4.289l30.997 37.885c48.944-22.963 88.297-62.858 110.781-110.780l-37.886-30.997a15.001 15.001 0 0 1-4.289-17.518l30-69.998a15 15 0 0 1 17.160-8.707l65 14.998A14.997 14.997 0 0 1 384 126c0 160.292-129.945 290-290 290z"></path></svg>
<span class="t" style="font-size: 13px; color: rgb(33, 37, 41); letter-spacing: -0.137px; left: 1054.51px; top: 815.4px;">02-11-23</span>
<span class="t" style="font-size: 13px; color: rgb(33, 37, 41); letter-spacing: -0.541px; left: 1126.46px; top: 805.4px;">531</span>
<span class="t" style="font-size: 13px; color: rgb(33, 37, 41); letter-spacing: -0.07px; left: 1127.41px; top: 824px;">дн.</span>
<svg class="i" style="left:1169.6px;top:814.9px" width="20.2" height="17" viewBox="0 0 21 18" preserveAspectRatio="none">
<path fill="#8a8a8a" stroke="#333" stroke-width="1.200" stroke-linejoin="round" d="M.6 5.600a2 2 0 0 1 2-2h2.600l1.600-2.400a1.200 1.200 0 0 1 1-.6h5.400a1.200 1.200 0 0 1 1 .6l1.600 2.400h2.600a2 2 0 0 1 2 2v9.200a2 2 0 0 1-2 2H2.600a2 2 0 0 1-2-2z"></path>
<circle cx="10.500" cy="9.300" r="4.300" fill="#fff" stroke="#2b2b2b" stroke-width="1.200"></circle>
<circle cx="10.500" cy="9.300" r="2.500" fill="#fff" stroke="#444" stroke-width=".8"></circle>
</svg>
<svg class="i" style="left:1203px;top:818px" width="19" height="6" viewBox="0 0 19 6" fill="#6c757d"><circle cx="3" cy="2.900" r="2.350"></circle><circle cx="9.500" cy="2.900" r="2.350"></circle><circle cx="15.900" cy="2.900" r="2.350"></circle></svg>
<svg class="i" style="left:1233.7px;top:811.9px" width="16.3" height="18.6" viewBox="0 0 448 512" fill="#007bff"><path d="M224.3 273l-136 136c-9.400 9.400-24.600 9.400-33.900 0l-22.600-22.600c-9.400-9.400-9.400-24.600 0-33.900l96.400-96.400-96.400-96.400c-9.400-9.400-9.400-24.600 0-33.900L54.300 103c9.400-9.400 24.600-9.400 33.900 0l136 136c9.500 9.400 9.500 24.600.1 34zm192-34l-136-136c-9.400-9.400-24.600-9.400-33.900 0l-22.600 22.600c-9.400 9.400-9.400 24.600 0 33.900l96.400 96.400-96.400 96.400c-9.400 9.400-9.400 24.600 0 33.900l22.600 22.600c9.400 9.400 24.600 9.400 33.900 0l136-136c9.400-9.200 9.400-24.400 0-33.800z"></path></svg>
<span class="t" style="font-size: 14px; left: 1065.88px; color: rgb(33, 37, 41); letter-spacing: 0.14px; top: 855.7px;">Всего найдено: <b>1</b> объект (ов)</span>

</body></html>
